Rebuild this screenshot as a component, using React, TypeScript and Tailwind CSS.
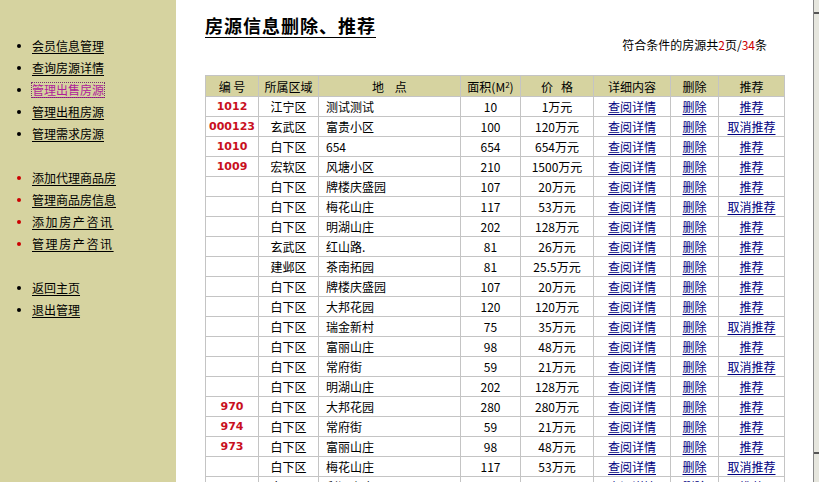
import React from 'react'

type Row = {
  id: string
  area: string
  place: string
  size: string
  price: string
  recommended: boolean
}

const rows: Row[] = [
  { id: '1012', area: '江宁区', place: '测试测试', size: '10', price: '1万元', recommended: false },
  { id: '000123', area: '玄武区', place: '富贵小区', size: '100', price: '120万元', recommended: true },
  { id: '1010', area: '白下区', place: '654', size: '654', price: '654万元', recommended: false },
  { id: '1009', area: '宏软区', place: '风塘小区', size: '210', price: '1500万元', recommended: false },
  { id: '', area: '白下区', place: '牌楼庆盛园', size: '107', price: '20万元', recommended: false },
  { id: '', area: '白下区', place: '梅花山庄', size: '117', price: '53万元', recommended: true },
  { id: '', area: '白下区', place: '明湖山庄', size: '202', price: '128万元', recommended: false },
  { id: '', area: '玄武区', place: '红山路.', size: '81', price: '26万元', recommended: false },
  { id: '', area: '建邺区', place: '茶南拓园', size: '81', price: '25.5万元', recommended: false },
  { id: '', area: '白下区', place: '牌楼庆盛园', size: '107', price: '20万元', recommended: false },
  { id: '', area: '白下区', place: '大邦花园', size: '120', price: '120万元', recommended: false },
  { id: '', area: '白下区', place: '瑞金新村', size: '75', price: '35万元', recommended: true },
  { id: '', area: '白下区', place: '富丽山庄', size: '98', price: '48万元', recommended: false },
  { id: '', area: '白下区', place: '常府街', size: '59', price: '21万元', recommended: true },
  { id: '', area: '白下区', place: '明湖山庄', size: '202', price: '128万元', recommended: false },
  { id: '970', area: '白下区', place: '大邦花园', size: '280', price: '280万元', recommended: false },
  { id: '974', area: '白下区', place: '常府街', size: '59', price: '21万元', recommended: false },
  { id: '973', area: '白下区', place: '富丽山庄', size: '98', price: '48万元', recommended: false },
  { id: '', area: '白下区', place: '梅花山庄', size: '117', price: '53万元', recommended: true },
  { id: '972', area: '白下区', place: '利源山庄', size: '62', price: '30万元', recommended: false },
]

const menuGroups: Array<{ bullet: string; items: Array<{ label: string; active?: boolean; wide?: boolean }> }> = [
  {
    bullet: 'bg-black',
    items: [
      { label: '会员信息管理' },
      { label: '查询房源详情' },
      { label: '管理出售房源', active: true },
      { label: '管理出租房源' },
      { label: '管理需求房源' },
    ],
  },
  {
    bullet: 'bg-[#cc0000]',
    items: [
      { label: '添加代理商品房' },
      { label: '管理商品房信息' },
      { label: '添加房产咨讯', wide: true },
      { label: '管理房产咨讯', wide: true },
    ],
  },
  {
    bullet: 'bg-black',
    items: [{ label: '返回主页' }, { label: '退出管理' }],
  },
]

const cell = 'h-[20px] border border-[#c4c4c4] p-0 leading-[19px]'
const link = 'text-[#000080] underline underline-offset-2'

export default function App() {
  return (
    <div
      className="flex h-[482px] w-[819px] overflow-hidden bg-white text-[12px] text-black"
      style={{ fontFamily: '"Noto Sans CJK SC", "Noto Sans", sans-serif' }}
    >
      {/* left menu */}
      <aside className="w-[176px] shrink-0 bg-[#d6d3a0] pt-[35px]">
        <div className="flex flex-col gap-[22px]">
          {menuGroups.map((group, gi) => (
            <ul key={gi} className="flex flex-col">
              {group.items.map((item) => (
                <li key={item.label} className="flex h-[22px] items-center">
                  <span className={`ml-[17px] h-[4px] w-[4px] rounded-full ${group.bullet}`} />
                  <a
                    href="#"
                    className={`ml-[11px] leading-[14px] underline underline-offset-2 ${
                      item.active ? 'text-[#b0219a] outline-1 outline-dotted outline-[#7a3070]' : 'text-black'
                    } ${item.wide ? 'tracking-[1.6px]' : ''}`}
                  >
                    {item.label}
                  </a>
                </li>
              ))}
            </ul>
          ))}
        </div>
      </aside>

      {/* content */}
      <main className="w-[637px] shrink-0 pl-[29px] pt-[14px]">
        <h1 className="text-[18px] font-bold leading-[22px] tracking-[1px] underline underline-offset-[4px]">
          房源信息删除、推荐
        </h1>
        <div className="mt-[1px] flex w-[579px] justify-end pr-[17px] leading-[16px]">
          <span>
            符合条件的房源共<span className="text-[#cc0000]">2</span>页/<span className="text-[#cc0000]">34</span>条
          </span>
        </div>

        <table className="mt-[22px] w-[579px] table-fixed border-collapse">
          <colgroup>
            <col className="w-[53px]" />
            <col className="w-[60px]" />
            <col className="w-[142px]" />
            <col className="w-[60px]" />
            <col className="w-[73px]" />
            <col className="w-[77px]" />
            <col className="w-[48px]" />
            <col className="w-[66px]" />
          </colgroup>
          <thead>
            <tr className="bg-[#d6d3a0] text-center">
              <th className={`${cell} h-[21px] font-normal`}>编&nbsp;号</th>
              <th className={`${cell} h-[21px] font-normal`}>所属区域</th>
              <th className={`${cell} h-[21px] font-normal`}>地&nbsp;&nbsp;&nbsp;&nbsp;点</th>
              <th className={`${cell} h-[21px] font-normal`}>
                面积(M<sup className="text-[8px]">2</sup>)
              </th>
              <th className={`${cell} h-[21px] font-normal`}>价&nbsp;&nbsp;&nbsp;格</th>
              <th className={`${cell} h-[21px] font-normal`}>详细内容</th>
              <th className={`${cell} h-[21px] font-normal`}>删除</th>
              <th className={`${cell} h-[21px] font-normal`}>推荐</th>
            </tr>
          </thead>
          <tbody>
            {rows.map((row, i) => (
              <tr key={i}>
                <td
                  className={`${cell} text-center text-[11px] font-bold text-[#c8101e]`}
                  style={{ fontFamily: '"DejaVu Sans", sans-serif' }}
                >
                  {row.id}
                </td>
                <td className={`${cell} text-center`}>{row.area}</td>
                <td className={`${cell} pl-[7px] text-left`}>{row.place}</td>
                <td className={`${cell} text-center`}>{row.size}</td>
                <td className={`${cell} text-center`}>{row.price}</td>
                <td className={`${cell} text-center`}>
                  <a href="#" className={link}>查阅详情</a>
                </td>
                <td className={`${cell} text-center`}>
                  <a href="#" className={link}>删除</a>
                </td>
                <td className={`${cell} text-center`}>
                  <a href="#" className={link}>{row.recommended ? '取消推荐' : '推荐'}</a>
                </td>
              </tr>
            ))}
          </tbody>
        </table>
      </main>

      {/* frame edge */}
      <div className="flex w-[6px] shrink-0 flex-col border-l border-[#8a8a8a] bg-[#e6e6de]">
        <div className="mt-[12px] h-[2px] bg-[#555]" />
        <div className="flex-1" />
        <div className="mb-[28px] h-[2px] bg-[#555]" />
      </div>
    </div>
  )
}
